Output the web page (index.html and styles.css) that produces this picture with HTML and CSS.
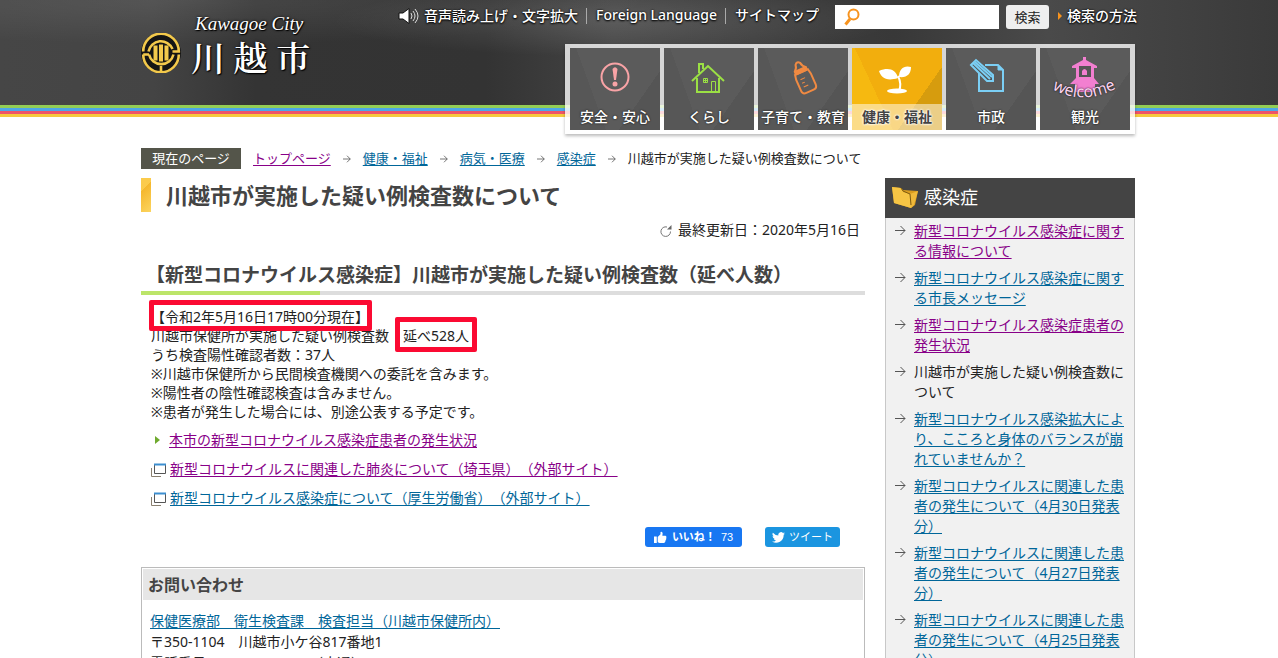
FILE: index.html
```html
<!DOCTYPE html>
<html lang="ja">
<head>
<meta charset="utf-8">
<title>川越市が実施した疑い例検査数について</title>
<link rel="stylesheet" href="styles.css">
</head>
<body>
<svg class="defs" aria-hidden="true">
  <symbol id="arrow" viewBox="0 0 11 11"><path d="M0 5.500H10M5.500 1L10 5.500L5.500 10" fill="none" stroke="currentColor"/></symbol>
  <symbol id="window" viewBox="0 0 16 15"><path d="M.5 5V13.500H10" fill="none" stroke="#8a8070"/><path d="M3.500 1.500H14.500V10.500H3.500Z" fill="#fff" stroke="#555"/><path d="M3 1.500H15" stroke="#3d8fd0" stroke-width="2"/></symbol>
</svg>
<header class="site-header">
  <div class="wrap header-row">
    <a class="logo" href="#">
      <svg class="emblem" viewBox="0 0 40 40" aria-hidden="true">
        <circle cx="20" cy="20" r="20" fill="#151515"/>
        <g fill="none" stroke="#f3c94b" stroke-width="2.600">
          <path d="M2.200 18.500A17.800 17.800 0 0 1 37.800 18.500H31.500M2.200 21.500A17.800 17.800 0 0 0 37.800 21.500M2.200 21.500H8M7.500 18.500A12.600 12.600 0 0 1 31.500 16M8 21.500A12.600 12.600 0 0 0 32.500 21.500M20 33V38"/>
        </g>
        <path d="M12.500 12.500h4v15h-4zM18 11.500h4v17h-4zM23.500 12.500h4v15h-4z" fill="#f3c94b"/>
      </svg>
      <span class="logo-text"><span class="logo-en">Kawagoe City</span><span class="logo-ja">川 越 市</span></span>
    </a>
    <div class="header-tools">
      <div class="utility">
        <ul class="util-links">
          <li><a href="#"><svg class="speaker" viewBox="0 0 21 16" aria-hidden="true"><path d="M1 5H5L11 .5V15.500L5 11H1Z" fill="#fff" stroke="#111"/><path d="M13 5Q15 8 13 11M15 3Q19 8 15 13M17 1Q23 8 17 15" fill="none" stroke="#ddd"/></svg>音声読み上げ・文字拡大</a></li>
          <li><a href="#">Foreign Language</a></li>
          <li><a href="#">サイトマップ</a></li>
        </ul>
        <form class="search">
          <span class="search-box">
            <svg viewBox="0 0 16 18" aria-hidden="true"><circle cx="9.500" cy="6.500" r="5" fill="none" stroke="#f7931e" stroke-width="2"/><path d="M6 11L1.500 16.500" stroke="#f7931e" stroke-width="3"/></svg>
            <input type="text" aria-label="サイト内検索">
          </span>
          <button type="submit">検索</button>
        </form>
        <a class="how" href="#">検索の方法</a>
      </div>
      <nav class="gnav">
        <a href="#"><svg viewBox="0 0 48 48" aria-hidden="true"><circle cx="24" cy="23" r="13.500" fill="none" stroke="#f9a3a6" stroke-width="2"/><path d="M21.500 15Q24 11.500 26.500 15L25 26H23Z" fill="#f9a3a6"/><circle cx="24" cy="30" r="2.500" fill="#f9a3a6"/></svg><span>安全・安心</span></a>
        <a href="#"><svg viewBox="0 0 48 48" aria-hidden="true"><g fill="none" stroke="#9be044" stroke-width="2"><path d="M7 27L23 12L39 27M12 24V38H34V24M14 19V10H18V15"/><path d="M26.500 37V27.500H30.500V37M18.500 24.500H22.500V28.500H18.500ZM20.500 24.500V28.500M18.500 26.500H22.500" stroke-width="1"/></g></svg><span>くらし</span></a>
        <a href="#"><svg viewBox="0 0 48 48" aria-hidden="true"><g fill="none" stroke="#f08a42" stroke-width="2" transform="rotate(-24 24 24)"><path d="M19 18V15Q22 13 22.500 9Q25 6 27.500 9Q28 13 31 15V18M17 18H33M18 18L17 23V35Q17 39 21 39H29Q33 39 33 35V23L32 18"/><path d="M21 24.500H26M21 28.500H24M21 32.500H26" stroke-width="1"/><path d="M20 15H30V18H20Z" fill="#f08a42"/></g></svg><span>子育て・教育</span></a>
        <a class="current" href="#"><svg viewBox="0 0 48 48" aria-hidden="true"><path d="M25 24C13 28 8 23 6 17C15 13 23 15 25 24ZM26 23C26 15 31 11 38 13C38 20 34 24 26 23Z" fill="#fff"/><path d="M25 22Q29 30 26 37" fill="none" stroke="#fff" stroke-width="2"/><ellipse cx="24" cy="37" rx="10" ry="2.500" fill="#fff"/></svg><span>健康・福祉</span></a>
        <a href="#"><svg viewBox="0 0 48 48" aria-hidden="true"><path d="M18 11H31L36 16V37H12V19" fill="none" stroke="#7bcff5" stroke-width="2"/><path d="M31 11V16H36" fill="#7bcff5" stroke="#7bcff5"/><path d="M4 11L9 6L26 21V27H20Z" fill="#4f5356" stroke="#7bcff5" stroke-width="2"/><path d="M6 9L23 25M8 8L25 23" stroke="#7bcff5" stroke-width="2"/></svg><span>市政</span></a>
        <a href="#"><svg class="tower" viewBox="0 0 72 48" aria-hidden="true"><path d="M34 6V3H37V6L48 12V14H45V24L50 30H46V38H26V30H21L27 24V14H23V12Z" fill="#f27fd0"/><path d="M30 12H42V23H30Z" fill="#555"/><path d="M33 21V17Q35.500 13 38 17V21Z" fill="#f27fd0"/><path id="arc" d="M3 35Q35 53 72 32" fill="none"/><text class="welcome"><textPath href="#arc">welcome</textPath></text></svg><span>観光</span></a>
      </nav>
    </div>
  </div>
</header>

<div class="wrap page">
  <nav class="breadcrumb" aria-label="現在のページ">
    <span class="here">現在のページ</span>
    <a class="visited" href="#">トップページ</a><svg class="arrow-s"><use href="#arrow"/></svg>
    <a href="#">健康・福祉</a><svg class="arrow-s"><use href="#arrow"/></svg>
    <a href="#">病気・医療</a><svg class="arrow-s"><use href="#arrow"/></svg>
    <a href="#">感染症</a><svg class="arrow-s"><use href="#arrow"/></svg>
    <span>川越市が実施した疑い例検査数について</span>
  </nav>
  <div class="columns">
    <main>
      <h1>川越市が実施した疑い例検査数について</h1>
      <p class="updated"><svg viewBox="0 0 12 12" aria-hidden="true"><path d="M10.500 6.500A4.800 4.800 0 1 1 7 2" fill="none" stroke="#777"/><path d="M7 4.500H11.500V0Z" fill="#666"/></svg>最終更新日：2020年5月16日</p>
      <h2>【新型コロナウイルス感染症】川越市が実施した疑い例検査数（延べ人数）</h2>
      <div class="body-text">
        <p><span class="mark">【令和2年5月16日17時00分現在】</span><br>
        川越市保健所が実施した疑い例検査数　<span class="mark wide">延べ528人</span><br>
        うち検査陽性確認者数：37人<br>
        ※川越市保健所から民間検査機関への委託を含みます。<br>
        ※陽性者の陰性確認検査は含みません。<br>
        ※患者が発生した場合には、別途公表する予定です。</p>
        <ul class="links">
          <li class="internal"><a class="visited" href="#">本市の新型コロナウイルス感染症患者の発生状況</a></li>
          <li><svg class="win"><use href="#window"/></svg><a class="visited" href="#">新型コロナウイルスに関連した肺炎について（埼玉県）（外部サイト）</a></li>
          <li><svg class="win"><use href="#window"/></svg><a href="#">新型コロナウイルス感染症について（厚生労働省）（外部サイト）</a></li>
        </ul>
      </div>
      <div class="social">
        <button class="like" type="button"><svg viewBox="0 0 14 14" aria-hidden="true"><path d="M0 6H3V13H0ZM4 6.500L7 3.500V1Q9 0 9.300 2.500L9 5H12.500Q14 6 13.200 7.500Q13.500 9 12.500 10Q12.500 12 11 13H6L4 12Z" fill="#fff"/></svg><b>いいね！</b><span>73</span></button>
        <button class="tweet" type="button"><svg viewBox="0 0 24 20" aria-hidden="true"><path d="M24 2.400a10 10 0 0 1-2.800.8 5 5 0 0 0 2.100-2.700 10 10 0 0 1-3.100 1.200 4.900 4.900 0 0 0-8.400 4.500A14 14 0 0 1 1.700 1a4.900 4.900 0 0 0 1.500 6.600 5 5 0 0 1-2.200-.6 4.900 4.900 0 0 0 3.900 4.900 5 5 0 0 1-2.200.1 4.900 4.900 0 0 0 4.600 3.400A10 10 0 0 1 0 17.500 14 14 0 0 0 21.500 5 10 10 0 0 0 24 2.400Z" fill="#fff"/></svg>ツイート</button>
      </div>
      <section class="contact">
        <h3>お問い合わせ</h3>
        <p><a href="#">保健医療部　衛生検査課　検査担当（川越市保健所内）</a><br>
        〒350-1104　川越市小ケ谷817番地1<br>
        電話番号：049-227-5102（直通）</p>
      </section>
    </main>
    <aside>
      <h2 class="side-title"><svg viewBox="0 0 28 24" aria-hidden="true"><path d="M1 2L10 3L12 5L27 6L24 20L20 23L3 18Z" fill="#d99c1f"/><path d="M19 9L27 6L23 20L20 23Z" fill="#f0b93a"/><path d="M1 2L10 3L12 7L19 9L20 23L3 18Z" fill="#f6c545"/><path d="M10 3L12 6L19 9L20 20" fill="none" stroke="#7e5c12"/></svg>感染症</h2>
      <ul class="side-list">
        <li><svg><use href="#arrow"/></svg><a class="visited" href="#">新型コロナウイルス感染症に関する情報について</a></li>
        <li><svg><use href="#arrow"/></svg><a href="#">新型コロナウイルス感染症に関する市長メッセージ</a></li>
        <li><svg><use href="#arrow"/></svg><a class="visited" href="#">新型コロナウイルス感染症患者の発生状況</a></li>
        <li><svg><use href="#arrow"/></svg><span>川越市が実施した疑い例検査数について</span></li>
        <li><svg><use href="#arrow"/></svg><a href="#">新型コロナウイルス感染拡大により、こころと身体のバランスが崩れていませんか？</a></li>
        <li><svg><use href="#arrow"/></svg><a href="#">新型コロナウイルスに関連した患者の発生について（4月30日発表分）</a></li>
        <li><svg><use href="#arrow"/></svg><a href="#">新型コロナウイルスに関連した患者の発生について（4月27日発表分）</a></li>
        <li><svg><use href="#arrow"/></svg><a href="#">新型コロナウイルスに関連した患者の発生について（4月25日発表分）</a></li>
      </ul>
    </aside>
  </div>
</div>
</body>
</html>
```
FILE: styles.css
```css
* { box-sizing: border-box; }
body {
  margin: 0;
  background: #fff;
  color: #222;
  font: 14px/20px "Noto Sans", "Noto Sans CJK JP", sans-serif;
  text-spacing-trim: space-all;
}
h1, h2, h3, p, ul { margin: 0; padding: 0; }
ul { list-style: none; }
a { color: #069; text-underline-offset: 2px; }
a.visited { color: #808; }
.defs { display: none; }
.wrap { max-width: 996px; margin: 0 auto; padding-right: 2px; }

.site-header {
  background:
    linear-gradient(#93cd55 0 3px, #4da6e8 3px 6px, #ee5468 6px 9px, #f6c93d 9px) 0 105px / 100% 12px no-repeat,
    radial-gradient(ellipse at 15% 0, #ffffff18, transparent 30%) 0 0 / 100% 105px no-repeat,
    radial-gradient(ellipse at 48% 20%, #ffffff20, transparent 30%) 0 0 / 100% 105px no-repeat,
    linear-gradient(90deg, #464646, #444 12%, #343434 20%, #333 38%, #444 48%, #383838 70%, #4a4a4a 82%, #3a3a3a) 0 0 / 100% 105px no-repeat;
}
.header-row { display: flex; justify-content: space-between; align-items: flex-start; }
.logo { display: flex; align-items: center; gap: 10px; padding-top: 12px; color: #fff; text-decoration: none; }
.emblem { width: 40px; height: 40px; margin-top: 16px; }
.logo-text { display: flex; flex-direction: column; text-shadow: 0 0 3px #000, 1px 1px 1px #000; }
.logo-en { font: italic 19px/24px "Liberation Serif", serif; padding-left: 4px; }
.logo-ja { font: 600 34px/42px "Noto Serif CJK JP", "Noto Sans CJK JP", serif; }
.header-tools { display: flex; flex-direction: column; align-items: flex-end; gap: 15px; padding-top: 5px; }
.utility { display: flex; align-items: center; margin-right: -2px; font-weight: 500; }
.utility a { color: #fff; text-decoration: none; text-shadow: 0 0 2px #000, 0 1px 2px #000; }
.util-links { display: flex; line-height: 14px; padding-bottom: 3px; }
.util-links li + li { border-left: 1px solid #aaa; margin-left: 8px; padding-left: 9px; }
.util-links a { display: flex; align-items: center; gap: 5px; }
.speaker { width: 21px; height: 16px; }
.search { display: flex; gap: 7px; margin-left: 16px; }
.search-box { display: flex; align-items: center; width: 164px; height: 24px; background: #fff; padding-left: 9px; }
.search-box svg { width: 16px; height: 18px; flex: none; }
.search-box input { width: 100%; min-width: 0; border: 0; background: none; font: inherit; outline: 0; }
.search button { width: 43px; height: 24px; border: 0; border-radius: 3px; background: #eee; color: #222; font: 13px/24px "Noto Sans CJK JP", sans-serif; padding: 0; }
.how { display: flex; align-items: center; gap: 5px; margin-left: 9px; padding-bottom: 2px; line-height: 22px; }
.how::before { content: ""; border: solid transparent; border-width: 4px 0 4px 4px; border-left-color: #f7931e; }

.gnav { display: flex; gap: 4px; padding: 4px 5px; background: #ffffffc8; box-shadow: 0 2px 3px #0004; }
.gnav a {
  display: flex; flex-direction: column; align-items: center; justify-content: space-between;
  width: 90px; height: 82px; padding-top: 6px;
  color: #fff; text-decoration: none; font-weight: 500; line-height: 26px; white-space: nowrap;
  text-shadow: 0 0 2px #000;
  background: linear-gradient(70deg, #575757 30%, transparent 30%), linear-gradient(125deg, transparent 72%, #555 72%), #5b5b5b;
}
.gnav svg { width: 48px; height: 48px; overflow: visible; }
.gnav .tower { width: 72px; }
.gnav .current {
  color: #444; font-weight: 700; text-shadow: 0 0 2px #fff, 0 0 2px #fff, 0 0 3px #fff;
  background: linear-gradient(65deg, #f6b910 32%, transparent 32%), linear-gradient(125deg, transparent 70%, #d69c0e 70%), #f2ae0d;
}
.current span { align-self: stretch; text-align: center; background: #ffffff80; }
.welcome { font: 16px "Noto Sans", sans-serif; fill: #fbd3ef; }

.page { padding-top: 14px; }
.breadcrumb { display: flex; align-items: center; gap: 12px; font-size: 13px; line-height: 21px; }
.here { background: #54554a; color: #fff; width: 100px; text-align: center; }
.arrow-s { width: 8px; height: 8px; color: #444; }
.arrow-s use { width: 8px; height: 8px; }
.columns { display: grid; grid-template-columns: minmax(0, 1fr) 250px; gap: 20px; padding-top: 9px; }
h1 {
  padding-left: 25px; font-size: 22px; line-height: 34px; color: #444;
  background: linear-gradient(135deg, #fbcb4c 30%, #f5b72d 30%, #fcd560) 0 0 / 10px 100% no-repeat;
}
.updated { padding: 8px 5px 0 0; text-align: right; }
.updated svg { width: 12px; height: 12px; margin-right: 6px; vertical-align: -2px; }
main h2 {
  margin-top: 15px; padding: 8px 0 8px 5px; font-size: 19px; line-height: 24px; color: #444;
  background: linear-gradient(90deg, #bce569 179px, #ddd 179px) 0 100% / 100% 4px no-repeat;
}
.body-text { padding: 12px 10px 0; line-height: 19px; }
.mark { position: relative; }
.mark::after { content: ""; position: absolute; inset: -7px -3px -5px -2px; border: 5px solid #fb0a32; border-radius: 2px; }
.mark.wide::after { inset: -9px -8px -7px; }
.links { display: flex; flex-direction: column; gap: 10px; padding-top: 9px; }
.links li { display: flex; align-items: center; gap: 3px; }
.links .internal { gap: 9px; padding-left: 4px; }
.internal::before { content: ""; border: solid transparent; border-width: 4px 0 4px 5px; border-left-color: #6faa2e; }
.win { width: 16px; height: 15px; margin-top: 4px; flex: none; }
.social { display: flex; justify-content: flex-end; gap: 23px; padding: 20px 25px 20px 0; }
.social button { display: flex; align-items: center; justify-content: center; gap: 5px; height: 20px; padding: 0; border: 0; border-radius: 3px; color: #fff; font: 11px/20px "Liberation Sans", "Noto Sans CJK JP", sans-serif; }
.social .like { width: 97px; background: #1877f2; }
.social .tweet { width: 75px; gap: 4px; background: #1b95e0; }
.social svg { width: 13px; height: 13px; }
.contact { border: 1px solid #bbb; padding: 1px; }
h3 { padding: 1px 5px 0; background: #e6e6e6; color: #444; font-size: 16px; line-height: 30px; }
.contact p { padding: 10px 7px; line-height: 21px; }

.side-title { display: flex; align-items: center; gap: 5px; padding: 0 0 2px 6px; background: #444; color: #fff; font-size: 18px; font-weight: 400; line-height: 38px; }
.side-title svg { width: 28px; height: 24px; }
.side-list { display: flex; flex-direction: column; gap: 7px; padding: 3px 7px 10px 9px; background: #f1f1f1; border: solid #c8c8c8; border-width: 0 1px 1px; }
.side-list li { display: flex; gap: 8px; line-height: 20px; }
.side-list svg { width: 11px; height: 11px; margin-top: 4px; flex: none; color: #555; }
```
